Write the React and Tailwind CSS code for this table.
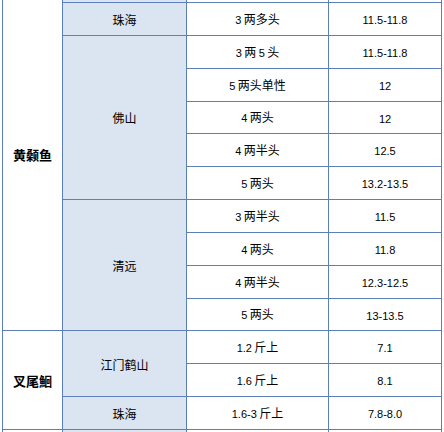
import React from "react";

const cjk = { fontFamily: '"Noto Sans CJK SC", "Noto Sans", sans-serif' };
const mix = { fontFamily: '"Liberation Sans", "Noto Sans CJK SC", sans-serif' };

function Spec({ parts }) {
  return (
    <span className="whitespace-nowrap leading-none" style={mix}>
      {parts.map((p, i) =>
        /[0-9.\-]/.test(p) ? (
          <span key={i} className="text-[11px]">{p}</span>
        ) : (
          <span key={i} className="text-[12px]">{p}</span>
        )
      )}
    </span>
  );
}

const rows = [
  { spec: ["3", "\u2009两多头"], price: "11.5-11.8" },
  { spec: ["3", "\u2009两\u2009", "5", "\u2009头"], price: "11.5-11.8" },
  { spec: ["5", "\u2009两头单性"], price: "12" },
  { spec: ["4", "\u2009两头"], price: "12" },
  { spec: ["4", "\u2009两半头"], price: "12.5" },
  { spec: ["5", "\u2009两头"], price: "13.2-13.5" },
  { spec: ["3", "\u2009两半头"], price: "11.5" },
  { spec: ["4", "\u2009两头"], price: "11.8" },
  { spec: ["4", "\u2009两半头"], price: "12.3-12.5" },
  { spec: ["5", "\u2009两头"], price: "13-13.5" },
  { spec: ["1.2", "\u2009斤上"], price: "7.1" },
  { spec: ["1.6", "\u2009斤上"], price: "8.1" },
  { spec: ["1.6-3", "\u2009斤上"], price: "7.8-8.0" },
];

export default function App() {
  return (
    <div className="w-[444px] h-[432px] overflow-hidden bg-white text-black">
      <div
        className="ml-[2px] mt-[-22px] w-[440px] grid gap-px bg-[#5d7fb7] px-px grid-cols-[59px_123px_141px_112px] grid-rows-[24px_32px_32px_32px_31px_32px_32px_32px_32px_32px_31px_32px_32px_32px_30px]"
      >
        {/* column 1 */}
        <div className="bg-white col-start-1 row-start-1 row-span-11 flex items-center justify-center">
          <span className="text-[13px] font-bold leading-none" style={cjk}>黄颡鱼</span>
        </div>
        <div className="bg-white col-start-1 row-start-12 row-span-3 flex items-center justify-center">
          <span className="text-[13px] font-bold leading-none" style={cjk}>叉尾鮰</span>
        </div>
        <div className="bg-white col-start-1 row-start-15" />

        {/* column 2 */}
        <div className="bg-[#dbe5f1] col-start-2 row-start-1" />
        <div className="bg-[#dbe5f1] col-start-2 row-start-2 flex items-center justify-center pt-[2px]">
          <span className="text-[12px] leading-none" style={cjk}>珠海</span>
        </div>
        <div className="bg-[#dbe5f1] col-start-2 row-start-3 row-span-5 flex items-center justify-center">
          <span className="text-[12px] leading-none" style={cjk}>佛山</span>
        </div>
        <div className="bg-[#dbe5f1] col-start-2 row-start-8 row-span-4 flex items-center justify-center pt-[2px]">
          <span className="text-[12px] leading-none" style={cjk}>清远</span>
        </div>
        <div className="bg-[#dbe5f1] col-start-2 row-start-12 row-span-2 flex items-center justify-center pt-[2px]">
          <span className="text-[12px] leading-none" style={cjk}>江门鹤山</span>
        </div>
        <div className="bg-[#dbe5f1] col-start-2 row-start-14 flex items-center justify-center pt-[2px]">
          <span className="text-[12px] leading-none" style={cjk}>珠海</span>
        </div>
        <div className="bg-[#dbe5f1] col-start-2 row-start-15" />

        {/* columns 3 & 4 */}
        <div className="bg-white col-start-3 row-start-1" />
        <div className="bg-white col-start-4 row-start-1" />
        {rows.map((r, i) => (
          <React.Fragment key={i}>
            <div
              className="bg-white col-start-3 flex items-center justify-center pb-[1px]"
              style={{ gridRowStart: i + 2 }}
            >
              <Spec parts={r.spec} />
            </div>
            <div
              className="bg-white col-start-4 flex items-center justify-center pt-[3px]"
              style={{ gridRowStart: i + 2 }}
            >
              <span className="text-[11px] leading-none" style={mix}>{r.price}</span>
            </div>
          </React.Fragment>
        ))}
        <div className="bg-white col-start-3 row-start-15" />
        <div className="bg-white col-start-4 row-start-15" />
      </div>
    </div>
  );
}
